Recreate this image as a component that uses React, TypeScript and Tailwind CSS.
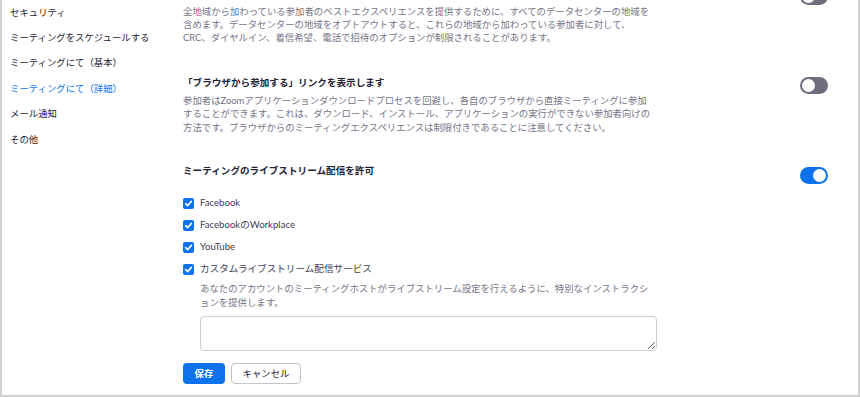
const font = { fontFamily: '"Lato", "Noto Sans CJK JP", sans-serif' }

const menu = [
  'セキュリティ',
  'ミーティングをスケジュールする',
  'ミーティングにて（基本）',
  'ミーティングにて（詳細）',
  'メール通知',
  'その他',
]

function Toggle({ on }: { on?: boolean }) {
  return (
    <div
      className={
        on
          ? 'w-[28px] h-[17px] shrink-0 rounded-full bg-[#0e72ed] flex items-center justify-end p-[2px]'
          : 'w-[28px] h-[17px] shrink-0 rounded-full bg-[#6e6e7e] flex items-center justify-start p-[2px]'
      }
    >
      <div className="w-[13px] h-[13px] rounded-full bg-white" />
    </div>
  )
}

function Checkbox({ label }: { label: string }) {
  return (
    <div className="h-[22px] flex items-center gap-[6px]">
      <div className="w-[11px] h-[11px] rounded-[2px] bg-[#0e72ed] flex items-center justify-center">
        <svg width="11" height="11" viewBox="0 0 11 11">
          <path d="M2.6 5.7 L4.6 7.6 L8.4 3.4" stroke="white" strokeWidth="1.6" fill="none" strokeLinecap="round" strokeLinejoin="round" />
        </svg>
      </div>
      <span className="text-[9.6px] text-[#3d3d4e]">{label}</span>
    </div>
  )
}

export default function App() {
  return (
    <div
      className="w-[860px] h-[397px] flex bg-white border-l-2 border-r-2 border-b-2 border-[#d2d2d2] overflow-hidden"
      style={font}
      lang="ja"
    >
      {/* Sidebar */}
      <div className="w-[181px] shrink-0 pl-[8px] flex flex-col">
        {menu.map((m, i) => (
          <div
            key={m}
            className={
              i === 3
                ? 'h-[25.4px] flex items-center text-[9.4px] text-[#0e72ed]'
                : 'h-[25.4px] flex items-center text-[9.4px] text-[#232333]'
            }
          >
            {m}
          </div>
        ))}
      </div>

      {/* Main */}
      <div className="flex-1 pr-[30px] flex flex-col">
        {/* data center block (heading scrolled out of view) */}
        <div className="flex items-start -mt-[14.5px]">
          <div className="w-[473px]">
            <div className="h-[16px]" />
            <p className="mt-[3.4px] text-[9.4px] leading-[13.3px] text-[#747487] whitespace-nowrap">
              全地域から加わっている参加者のベストエクスペリエンスを提供するために、すべてのデータセンターの地域を
              <br />
              含めます。データセンターの地域をオプトアウトすると、これらの地域から加わっている参加者に対して、
              <br />
              CRC、ダイヤルイン、着信希望、電話で招待のオプションが制限されることがあります。
            </p>
          </div>
          <div className="ml-auto mt-[2.5px]">
            <Toggle />
          </div>
        </div>

        {/* browser join link */}
        <div className="flex items-start mt-[30px]">
          <div className="w-[473px]">
            <div className="h-[16px] text-[9.6px] font-bold text-[#232333] leading-[16px]">「ブラウザから参加する」リンクを表示します</div>
            <p className="mt-[3.4px] text-[9.4px] leading-[13.3px] text-[#747487] whitespace-nowrap">
              参加者はZoomアプリケーションダウンロードプロセスを回避し、各自のブラウザから直接ミーティングに参加
              <br />
              することができます。これは、ダウンロード、インストール、アプリケーションの実行ができない参加者向けの
              <br />
              方法です。ブラウザからのミーティングエクスペリエンスは制限付きであることに注意してください。
            </p>
          </div>
          <div className="ml-auto mt-[2.5px]">
            <Toggle />
          </div>
        </div>

        {/* live stream */}
        <div className="flex items-start mt-[28.7px]">
          <div className="w-[473px]">
            <div className="h-[16px] text-[9.6px] font-bold text-[#232333] leading-[16px]">ミーティングのライブストリーム配信を許可</div>
            <div className="mt-[13.3px] flex flex-col">
              <Checkbox label="Facebook" />
              <Checkbox label="FacebookのWorkplace" />
              <Checkbox label="YouTube" />
              <Checkbox label="カスタムライブストリーム配信サービス" />
            </div>
            <div className="pl-[17px]">
              <p className="mt-[2.4px] text-[9.4px] leading-[13.3px] text-[#747487] whitespace-nowrap">
                あなたのアカウントのミーティングホストがライブストリーム設定を行えるように、特別なインストラクシ
                <br />
                ョンを提供します。
              </p>
              <textarea className="mt-[6.7px] block w-[457px] h-[35.5px] border border-[#cdcdd6] rounded-[4px] bg-white" />
            </div>
            <div className="mt-[11.7px] flex gap-[6px]">
              <button className="w-[42px] h-[21.5px] rounded-[4px] bg-[#0e72ed] text-white text-[9.4px] font-bold">保存</button>
              <button className="w-[70px] h-[21.5px] rounded-[4px] border border-[#c4c4cc] bg-white text-[#232333] text-[9.4px]">キャンセル</button>
            </div>
          </div>
          <div className="ml-auto mt-[4.3px]">
            <Toggle on />
          </div>
        </div>
      </div>
    </div>
  )
}
